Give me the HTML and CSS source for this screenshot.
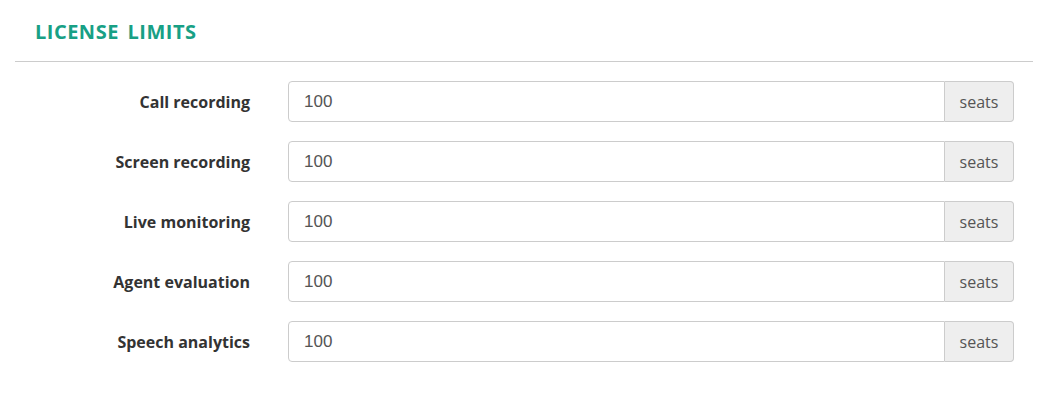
FILE: index.html
```html
<!DOCTYPE html>
<html>
<head>
<meta charset="utf-8">
<link rel="stylesheet" href="styles.css">
</head>
<body>
<div class="panel">
  <h2 class="title">LICENSE LIMITS</h2>
  <div class="form">
    <div class="row"><label class="label">Call recording</label><div class="group"><div class="input">100</div><div class="addon">seats</div></div></div>
    <div class="row"><label class="label">Screen recording</label><div class="group"><div class="input">100</div><div class="addon">seats</div></div></div>
    <div class="row"><label class="label">Live monitoring</label><div class="group"><div class="input">100</div><div class="addon">seats</div></div></div>
    <div class="row"><label class="label">Agent evaluation</label><div class="group"><div class="input">100</div><div class="addon">seats</div></div></div>
    <div class="row"><label class="label">Speech analytics</label><div class="group"><div class="input">100</div><div class="addon">seats</div></div></div>
  </div>
</div>
</body>
</html>
```
FILE: styles.css
```css
html, body { margin: 0; padding: 0; background: #fff; }
.panel { width: 1018px; margin-left: 15px; font-family: "Open Sans", sans-serif; }
.title {
  margin: 0;
  padding: 19px 0 0 20px;
  height: 62px;
  box-sizing: border-box;
  font-size: 20px;
  line-height: 26px;
  font-weight: 700;
  color: #18a085;
  letter-spacing: 0.5px;
  word-spacing: 3px;
  border-bottom: 1px solid #ccc;
}
.form { padding-top: 19px; display: flex; flex-direction: column; gap: 19px; }
.row { display: flex; align-items: center; }
.label {
  width: 235px;
  text-align: right;
  font-size: 16px;
  font-weight: 700;
  color: #333;
  margin-right: 38px;
}
.group { display: flex; width: 726px; height: 41px; }
.input {
  flex: 1;
  border: 1px solid #ccc;
  border-radius: 4px 0 0 4px;
  padding: 0 15px;
  font-family: "Liberation Sans", Arial, sans-serif;
  font-size: 17px;
  color: #555;
  display: flex; align-items: center;
}
.addon {
  width: 68px;
  border: 1px solid #ccc;
  border-left: none;
  border-radius: 0 4px 4px 0;
  background: #eee;
  color: #555;
  font-size: 16px;
  display: flex; align-items: center; justify-content: center;
}
```
